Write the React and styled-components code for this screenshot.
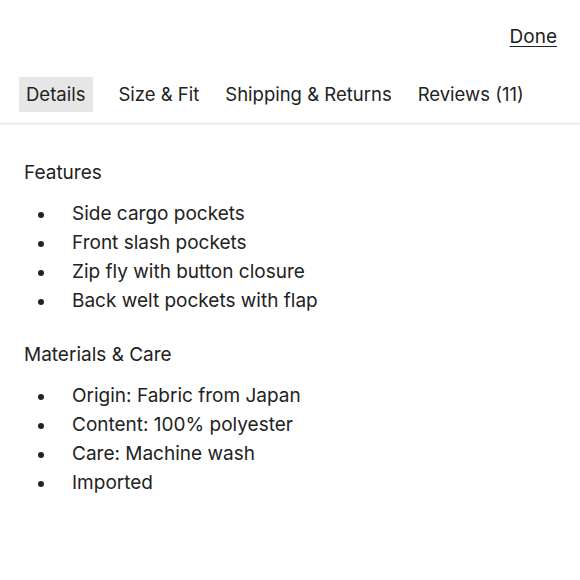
import React from "react";
import styled, { createGlobalStyle } from "styled-components";

const Global = createGlobalStyle`
  html, body { margin: 0; padding: 0; background: #fff; }
  body { font-family: "Inter", "Lato", sans-serif; color: #222; }
`;

const Page = styled.div`
  width: 580px;
  height: 580px;
  display: flex;
  flex-direction: column;
  background: #fff;
`;

const TopBar = styled.div`
  display: flex;
  justify-content: flex-end;
  padding: 25px 23px 0 0;
  height: 52px;
  box-sizing: border-box;
`;

const DoneLink = styled.a`
  font-size: 19px;
  color: #222;
  text-decoration: underline;
  text-underline-offset: 3px;
  cursor: pointer;
`;

const Tabs = styled.div`
  display: flex;
  align-items: center;
  padding: 25px 0 11px 19px;
  border-bottom: 1px solid #e4e4e4;
  box-shadow: 0 1px 1px rgba(0,0,0,0.03);
`;

const Tab = styled.div`
  font-size: 18.5px;
  padding: 6px 8px 6px 7px;
  margin-right: ${(p) => p.$mr}px;
  background: ${(p) => (p.$active ? "#e6e6e6" : "transparent")};
  line-height: 23px;
`;

const Content = styled.div`
  padding: 37px 24px 0 24px;
`;

const Heading = styled.div`
  font-size: 19px;
  line-height: 24px;
  margin-bottom: 14px;
`;

const List = styled.ul`
  list-style: none;
  margin: 0 0 28px 0;
  padding: 0;
`;

const Item = styled.li`
  display: flex;
  align-items: center;
  font-size: 19px;
  line-height: 29px;
  &::before {
    content: "";
    width: 6px;
    height: 6px;
    border-radius: 50%;
    background: #222;
    margin-left: 14px;
    margin-right: 28px;
    flex-shrink: 0;
    margin-top: 3px;
  }
`;

const sections = [
  { title: "Features", items: ["Side cargo pockets", "Front slash pockets", "Zip fly with button closure", "Back welt pockets with flap"] },
  { title: "Materials & Care", items: ["Origin: Fabric from Japan", "Content: 100% polyester", "Care: Machine wash", "Imported"] },
];

const tabs = [
  { label: "Details", active: true, mr: 18 },
  { label: "Size & Fit", mr: 11 },
  { label: "Shipping & Returns", mr: 11 },
  { label: "Reviews (11)", mr: 0 },
];

export default function App() {
  return (
    <Page>
      <Global />
      <TopBar>
        <DoneLink>Done</DoneLink>
      </TopBar>
      <Tabs>
        {tabs.map((t) => (
          <Tab key={t.label} $active={t.active} $mr={t.mr}>{t.label}</Tab>
        ))}
      </Tabs>
      <Content>
        {sections.map((s) => (
          <div key={s.title}>
            <Heading>{s.title}</Heading>
            <List>
              {s.items.map((i) => (
                <Item key={i}>{i}</Item>
              ))}
            </List>
          </div>
        ))}
      </Content>
    </Page>
  );
}
